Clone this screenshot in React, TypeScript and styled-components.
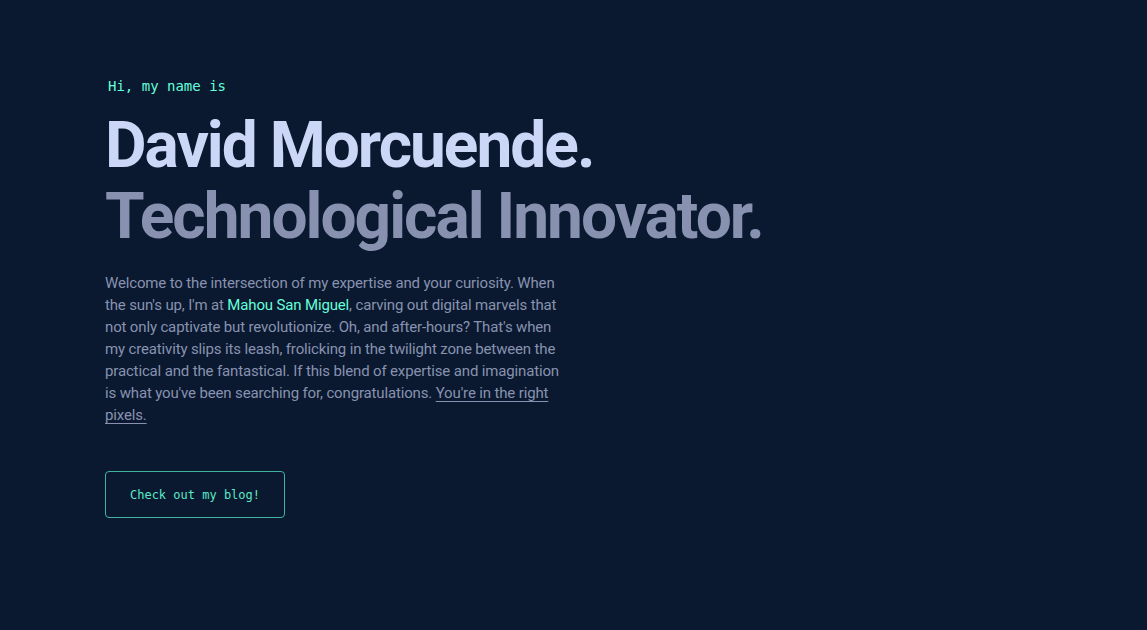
import React from "react";
import styled, { createGlobalStyle } from "styled-components";

const Global = createGlobalStyle`
  html, body { margin: 0; padding: 0; background: #0a192f; }
  body { font-family: Roboto, Inter, "Noto Sans", sans-serif; -webkit-font-smoothing: antialiased; }
`;

const Page = styled.main`
  min-height: 630px;
  background: #0a192f;
  padding: 76px 0 0 105px;
  box-sizing: border-box;
`;

const Hero = styled.section`
  display: flex;
  flex-direction: column;
  align-items: flex-start;
`;

const Greeting = styled.h1`
  margin: 0 0 0 3px;
  color: #64ffda;
  font-family: "DejaVu Sans Mono", "Liberation Mono", monospace;
  font-size: 14px;
  font-weight: 400;
  line-height: 20px;
`;

const BigHeading = styled.h2<{ $muted?: boolean }>`
  margin: 0;
  color: ${(p) => (p.$muted ? "#8892b0" : "#ccd6f6")};
  font-family: Roboto, Inter, sans-serif;
  font-size: 64px;
  font-weight: 700;
  line-height: 71px;
  letter-spacing: -2px;
`;

const Name = styled(BigHeading)`
  margin-top: 14px;
`;

const Intro = styled.p`
  margin: 20px 0 0;
  max-width: 462px;
  color: #8892b0;
  font-family: Roboto, Inter, sans-serif;
  font-size: 15px;
  line-height: 22px;
  letter-spacing: -0.15px;
`;

const Highlight = styled.a`
  color: #64ffda;
  text-decoration: none;
`;

const Underlined = styled.a`
  color: #8892b0;
  text-decoration: underline;
  text-underline-offset: 3px;
`;

const BlogButton = styled.a`
  margin-top: 45px;
  display: flex;
  align-items: center;
  justify-content: center;
  width: 180px;
  height: 47px;
  box-sizing: border-box;
  border: 1px solid #3fb3a0;
  border-radius: 4px;
  color: #5ce8c8;
  font-family: "DejaVu Sans Mono", "Liberation Mono", monospace;
  font-size: 12px;
  text-decoration: none;
`;

export default function App() {
  return (
    <>
      <Global />
      <Page>
        <Hero>
          <Greeting>Hi, my name is</Greeting>
          <Name>David Morcuende.</Name>
          <BigHeading $muted>Technological Innovator.</BigHeading>
          <Intro>
            Welcome to the intersection of my expertise and your curiosity. When the sun's up, I'm at{" "}
            <Highlight href="#">Mahou San Miguel</Highlight>, carving out digital marvels that not only
            captivate but revolutionize. Oh, and after-hours? That's when my creativity slips its leash,
            frolicking in the twilight zone between the practical and the fantastical. If this blend of
            expertise and imagination is what you've been searching for, congratulations.{" "}
            <Underlined href="#">You're in the right pixels.</Underlined>
          </Intro>
          <BlogButton href="#">Check out my blog!</BlogButton>
        </Hero>
      </Page>
    </>
  );
}
